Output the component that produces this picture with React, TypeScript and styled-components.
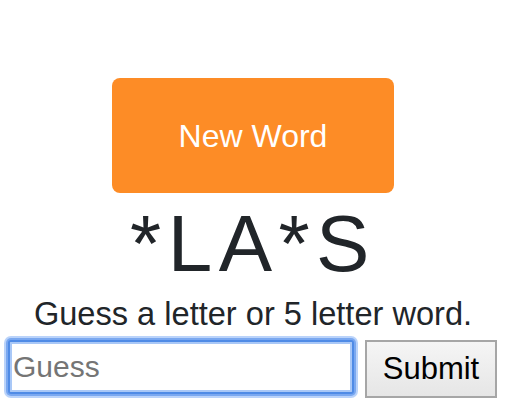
import React from "react";
import styled, { createGlobalStyle } from "styled-components";

const GlobalStyle = createGlobalStyle`
  html, body {
    margin: 0;
    padding: 0;
    background: #ffffff;
  }
  body {
    padding: 8px;
    font-family: "Liberation Sans", Arial, Helvetica, sans-serif;
    color: #212529;
  }
`;

const Page = styled.main`
  display: flex;
  flex-direction: column;
  align-items: center;
  padding-top: 70px;
`;

const NewWordButton = styled.button`
  width: 282px;
  height: 115px;
  border: none;
  border-radius: 8px;
  background: #fd8c26;
  color: #ffffff;
  font-family: "Liberation Sans", Arial, Helvetica, sans-serif;
  font-size: 32px;
  line-height: 1;
  padding: 0;
  cursor: pointer;
`;

const Puzzle = styled.h1`
  margin: 3px 0 0 0;
  font-family: "Liberation Sans", Arial, Helvetica, sans-serif;
  font-weight: 400;
  font-size: 80px;
  line-height: 96px;
  letter-spacing: 6.5px;
  color: #212529;
`;

const Prompt = styled.p`
  margin: 0;
  font-size: 32.6px;
  line-height: 44px;
  color: #212529;
`;

const GuessForm = styled.form`
  align-self: stretch;
  display: flex;
  align-items: flex-start;
  gap: 11px;
  margin-top: 4px;
`;

const GuessInput = styled.input`
  box-sizing: border-box;
  width: 346px;
  height: 54px;
  margin: 0;
  padding: 0 0 0 3px;
  border: 2px solid #4f8be6;
  border-radius: 3px;
  outline: none;
  box-shadow: 0 0 0 2px #7aa8f0, 0 0 0 4px rgba(130, 175, 245, 0.55),
    inset 0 0 0 2px #a9c8f7;
  font-family: "Liberation Sans", Arial, Helvetica, sans-serif;
  font-size: 30px;
  color: #000000;
  caret-color: #000000;
  background: #ffffff;

  &::placeholder {
    color: #757575;
  }
`;

const SubmitButton = styled.button`
  box-sizing: border-box;
  width: 132px;
  height: 58px;
  margin: 0;
  padding: 0;
  border: 2px solid #a6a6a6;
  border-radius: 0;
  background: linear-gradient(#f5f5f5, #e6e6e6);
  font-family: "Liberation Sans", Arial, Helvetica, sans-serif;
  font-size: 31px;
  color: #000000;
  cursor: pointer;
`;

export default function App() {
  return (
    <>
      <GlobalStyle />
      <Page>
        <NewWordButton type="button">New Word</NewWordButton>
        <Puzzle>*LA*S</Puzzle>
        <Prompt>Guess a letter or 5 letter word.</Prompt>
        <GuessForm onSubmit={(e) => e.preventDefault()}>
          <GuessInput type="text" placeholder="Guess" autoFocus />
          <SubmitButton type="submit">Submit</SubmitButton>
        </GuessForm>
      </Page>
    </>
  );
}
